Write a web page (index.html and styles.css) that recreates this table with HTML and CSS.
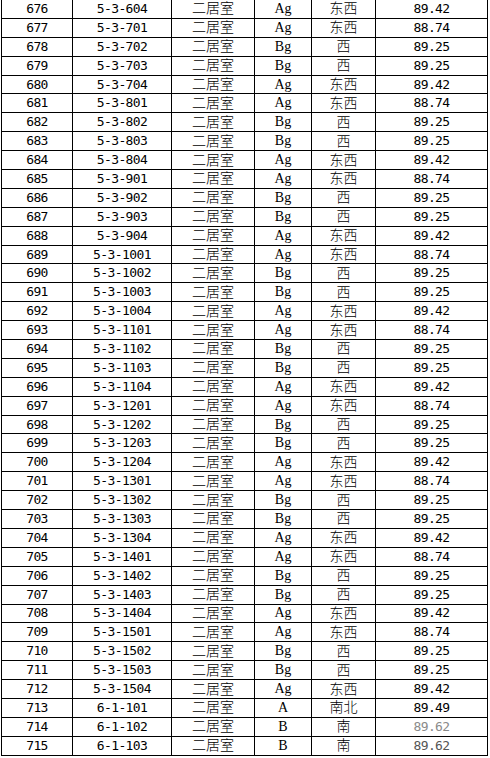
FILE: index.html
```html
<!DOCTYPE html>
<html lang="zh">
<head>
<meta charset="utf-8">
<title>房源表</title>
<link rel="stylesheet" href="styles.css">
</head>
<body>
<table class="sheet">
<colgroup>
<col class="c-no"><col class="c-room"><col class="c-type"><col class="c-kind"><col class="c-dir"><col class="c-area">
</colgroup>
<tbody id="rows">
<tr><td class="num">676</td><td class="num">5-3-604</td><td class="cjk">二居室</td><td class="lat">Ag</td><td class="cjk">东西</td><td class="num">89.42</td></tr>
<tr><td class="num">677</td><td class="num">5-3-701</td><td class="cjk">二居室</td><td class="lat">Ag</td><td class="cjk">东西</td><td class="num">88.74</td></tr>
<tr><td class="num">678</td><td class="num">5-3-702</td><td class="cjk">二居室</td><td class="lat">Bg</td><td class="cjk">西</td><td class="num">89.25</td></tr>
<tr><td class="num">679</td><td class="num">5-3-703</td><td class="cjk">二居室</td><td class="lat">Bg</td><td class="cjk">西</td><td class="num">89.25</td></tr>
<tr><td class="num">680</td><td class="num">5-3-704</td><td class="cjk">二居室</td><td class="lat">Ag</td><td class="cjk">东西</td><td class="num">89.42</td></tr>
<tr><td class="num">681</td><td class="num">5-3-801</td><td class="cjk">二居室</td><td class="lat">Ag</td><td class="cjk">东西</td><td class="num">88.74</td></tr>
<tr><td class="num">682</td><td class="num">5-3-802</td><td class="cjk">二居室</td><td class="lat">Bg</td><td class="cjk">西</td><td class="num">89.25</td></tr>
<tr><td class="num">683</td><td class="num">5-3-803</td><td class="cjk">二居室</td><td class="lat">Bg</td><td class="cjk">西</td><td class="num">89.25</td></tr>
<tr><td class="num">684</td><td class="num">5-3-804</td><td class="cjk">二居室</td><td class="lat">Ag</td><td class="cjk">东西</td><td class="num">89.42</td></tr>
<tr><td class="num">685</td><td class="num">5-3-901</td><td class="cjk">二居室</td><td class="lat">Ag</td><td class="cjk">东西</td><td class="num">88.74</td></tr>
<tr><td class="num">686</td><td class="num">5-3-902</td><td class="cjk">二居室</td><td class="lat">Bg</td><td class="cjk">西</td><td class="num">89.25</td></tr>
<tr><td class="num">687</td><td class="num">5-3-903</td><td class="cjk">二居室</td><td class="lat">Bg</td><td class="cjk">西</td><td class="num">89.25</td></tr>
<tr><td class="num">688</td><td class="num">5-3-904</td><td class="cjk">二居室</td><td class="lat">Ag</td><td class="cjk">东西</td><td class="num">89.42</td></tr>
<tr><td class="num">689</td><td class="num">5-3-1001</td><td class="cjk">二居室</td><td class="lat">Ag</td><td class="cjk">东西</td><td class="num">88.74</td></tr>
<tr><td class="num">690</td><td class="num">5-3-1002</td><td class="cjk">二居室</td><td class="lat">Bg</td><td class="cjk">西</td><td class="num">89.25</td></tr>
<tr><td class="num">691</td><td class="num">5-3-1003</td><td class="cjk">二居室</td><td class="lat">Bg</td><td class="cjk">西</td><td class="num">89.25</td></tr>
<tr><td class="num">692</td><td class="num">5-3-1004</td><td class="cjk">二居室</td><td class="lat">Ag</td><td class="cjk">东西</td><td class="num">89.42</td></tr>
<tr><td class="num">693</td><td class="num">5-3-1101</td><td class="cjk">二居室</td><td class="lat">Ag</td><td class="cjk">东西</td><td class="num">88.74</td></tr>
<tr><td class="num">694</td><td class="num">5-3-1102</td><td class="cjk">二居室</td><td class="lat">Bg</td><td class="cjk">西</td><td class="num">89.25</td></tr>
<tr><td class="num">695</td><td class="num">5-3-1103</td><td class="cjk">二居室</td><td class="lat">Bg</td><td class="cjk">西</td><td class="num">89.25</td></tr>
<tr><td class="num">696</td><td class="num">5-3-1104</td><td class="cjk">二居室</td><td class="lat">Ag</td><td class="cjk">东西</td><td class="num">89.42</td></tr>
<tr><td class="num">697</td><td class="num">5-3-1201</td><td class="cjk">二居室</td><td class="lat">Ag</td><td class="cjk">东西</td><td class="num">88.74</td></tr>
<tr><td class="num">698</td><td class="num">5-3-1202</td><td class="cjk">二居室</td><td class="lat">Bg</td><td class="cjk">西</td><td class="num">89.25</td></tr>
<tr><td class="num">699</td><td class="num">5-3-1203</td><td class="cjk">二居室</td><td class="lat">Bg</td><td class="cjk">西</td><td class="num">89.25</td></tr>
<tr><td class="num">700</td><td class="num">5-3-1204</td><td class="cjk">二居室</td><td class="lat">Ag</td><td class="cjk">东西</td><td class="num">89.42</td></tr>
<tr><td class="num">701</td><td class="num">5-3-1301</td><td class="cjk">二居室</td><td class="lat">Ag</td><td class="cjk">东西</td><td class="num">88.74</td></tr>
<tr><td class="num">702</td><td class="num">5-3-1302</td><td class="cjk">二居室</td><td class="lat">Bg</td><td class="cjk">西</td><td class="num">89.25</td></tr>
<tr><td class="num">703</td><td class="num">5-3-1303</td><td class="cjk">二居室</td><td class="lat">Bg</td><td class="cjk">西</td><td class="num">89.25</td></tr>
<tr><td class="num">704</td><td class="num">5-3-1304</td><td class="cjk">二居室</td><td class="lat">Ag</td><td class="cjk">东西</td><td class="num">89.42</td></tr>
<tr><td class="num">705</td><td class="num">5-3-1401</td><td class="cjk">二居室</td><td class="lat">Ag</td><td class="cjk">东西</td><td class="num">88.74</td></tr>
<tr><td class="num">706</td><td class="num">5-3-1402</td><td class="cjk">二居室</td><td class="lat">Bg</td><td class="cjk">西</td><td class="num">89.25</td></tr>
<tr><td class="num">707</td><td class="num">5-3-1403</td><td class="cjk">二居室</td><td class="lat">Bg</td><td class="cjk">西</td><td class="num">89.25</td></tr>
<tr><td class="num">708</td><td class="num">5-3-1404</td><td class="cjk">二居室</td><td class="lat">Ag</td><td class="cjk">东西</td><td class="num">89.42</td></tr>
<tr><td class="num">709</td><td class="num">5-3-1501</td><td class="cjk">二居室</td><td class="lat">Ag</td><td class="cjk">东西</td><td class="num">88.74</td></tr>
<tr><td class="num">710</td><td class="num">5-3-1502</td><td class="cjk">二居室</td><td class="lat">Bg</td><td class="cjk">西</td><td class="num">89.25</td></tr>
<tr><td class="num">711</td><td class="num">5-3-1503</td><td class="cjk">二居室</td><td class="lat">Bg</td><td class="cjk">西</td><td class="num">89.25</td></tr>
<tr><td class="num">712</td><td class="num">5-3-1504</td><td class="cjk">二居室</td><td class="lat">Ag</td><td class="cjk">东西</td><td class="num">89.42</td></tr>
<tr><td class="num">713</td><td class="num">6-1-101</td><td class="cjk">二居室</td><td class="lat">A</td><td class="cjk">南北</td><td class="num">89.49</td></tr>
<tr><td class="num">714</td><td class="num">6-1-102</td><td class="cjk">二居室</td><td class="lat">B</td><td class="cjk">南</td><td class="num faded">89.62</td></tr>
<tr><td class="num">715</td><td class="num">6-1-103</td><td class="cjk">二居室</td><td class="lat">B</td><td class="cjk">南</td><td class="num dim">89.62</td></tr>
</tbody>
</table>
</body>
</html>
```
FILE: styles.css
```css
html, body {
  margin: 0;
  padding: 0;
  background: #fff;
}

.sheet {
  border-collapse: collapse;
  table-layout: fixed;
  margin: -1px 0 0 1px;
  color: #000;
}

.c-no { width: 71px; }
.c-room { width: 99px; }
.c-type { width: 83px; }
.c-kind { width: 57px; }
.c-dir { width: 64px; }
.c-area { width: 112px; }

.sheet td {
  border: 1px solid #000;
  height: 17.9px;
  padding: 0;
  text-align: center;
  vertical-align: middle;
  line-height: 14px;
  white-space: nowrap;
}

.num {
  font-family: "DejaVu Sans Mono", monospace;
  font-size: 13px;
  letter-spacing: -0.6px;
}

.sheet td.cjk {
  font-family: "Noto Sans CJK SC", sans-serif;
  font-size: 14px;
  font-weight: 300;
  line-height: 15px;
  height: 15.9px;
  padding-bottom: 2px;
}

.lat {
  font-family: "Liberation Serif", serif;
  font-size: 14px;
}

.faded { color: #8a8a8a; }
.dim { color: #555; }
```
